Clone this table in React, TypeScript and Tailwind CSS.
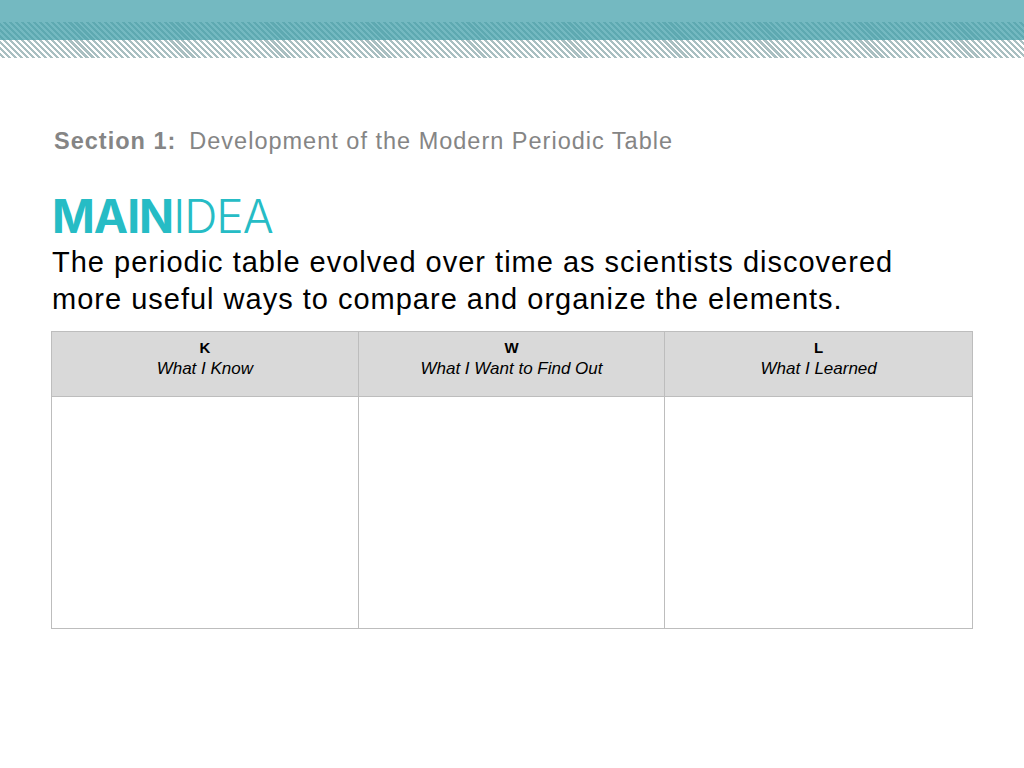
const columns = [
  { letter: "K", label: "What I Know" },
  { letter: "W", label: "What I Want to Find Out" },
  { letter: "L", label: "What I Learned" },
];

export default function App() {
  return (
    <div className="w-[1024px] h-[768px] bg-white overflow-hidden font-['Liberation_Sans',Arial,sans-serif]">
      {/* Header band */}
      <div className="h-[22px] bg-[#74b9c1]" />
      <div className="h-[18px] bg-[#74b9c1] bg-[repeating-linear-gradient(45deg,#74b9c1_0px,#74b9c1_2px,#5ea9b1_2px,#5ea9b1_4.2px)]" />
      <div className="h-[18px] bg-[repeating-linear-gradient(45deg,#ffffff_0px,#ffffff_2px,#a9bfc1_2px,#a9bfc1_4.2px)]" />

      <div className="px-[52px]">
        <p className="mt-[68px] text-[23.5px] tracking-[1px] text-[#858585] leading-[30px] ml-[2px]">
          <span className="font-bold">Section 1:</span>
          <span className="ml-[13px]">Development of the Modern Periodic Table</span>
        </p>

        <div className="mt-[38px] text-[#26bcc5] text-[46px] leading-[44px] font-['Inter',sans-serif] tracking-[-1px]">
          <span className="font-bold">MAIN</span>
          <span className="font-light">IDEA</span>
        </div>

        <p className="mt-[6px] text-[29px] tracking-[1px] leading-[37px] text-black">
          The periodic table evolved over time as scientists discovered
          <br />
          more useful ways to compare and organize the elements.
        </p>
      </div>

      <div className="ml-[51px] mt-[13px] w-[922px] border border-[#bdbdbd] grid grid-cols-3">
        {columns.map((c, i) => (
          <div
            key={c.letter}
            className={`h-[65px] bg-[#d9d9d9] border-b border-[#bdbdbd] text-center pt-[5px] text-[17px] leading-[21px] text-black ${i < 2 ? "border-r" : ""}`}
          >
            <div className="font-bold text-[15px]">{c.letter}</div>
            <div className="italic">{c.label}</div>
          </div>
        ))}
        {columns.map((c, i) => (
          <div key={c.letter + "b"} className={`h-[231px] border-[#bdbdbd] ${i < 2 ? "border-r" : ""}`} />
        ))}
      </div>
    </div>
  );
}
